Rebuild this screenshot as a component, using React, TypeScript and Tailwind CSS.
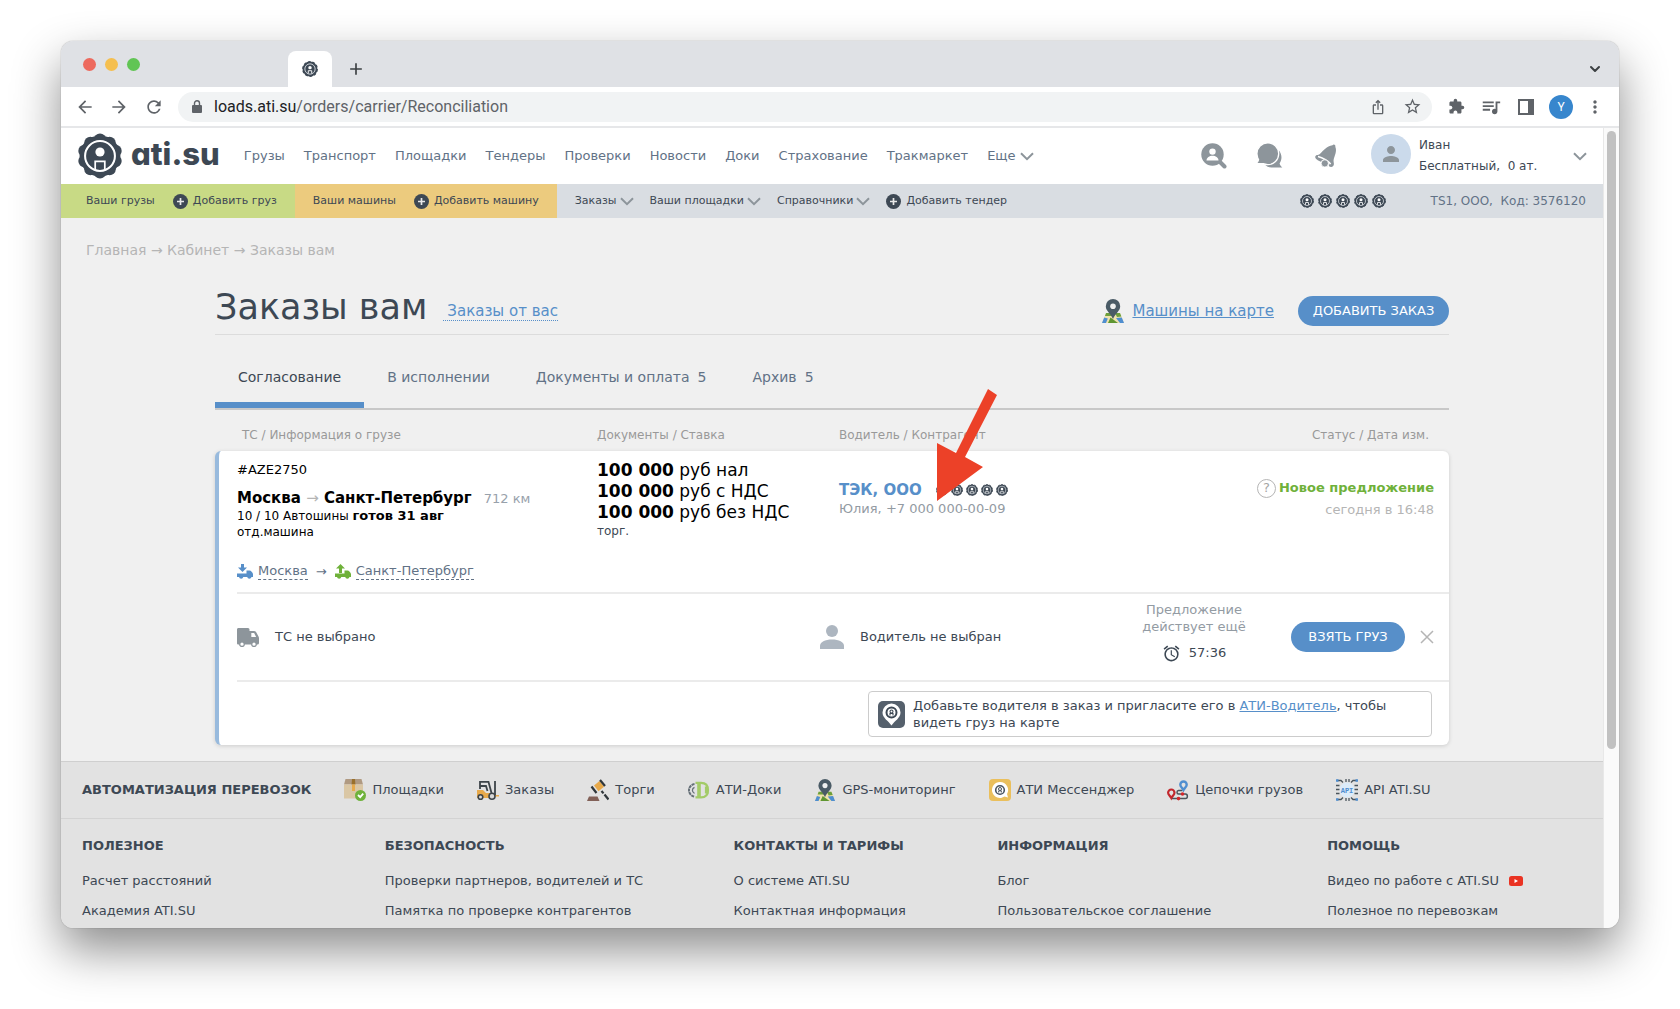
import React from "react";
import {
  MdAdd,
  MdAlarm,
  MdArrowBack,
  MdArrowForward,
  MdExtension,
  MdIosShare,
  MdMoreVert,
  MdPerson,
  MdQueueMusic,
  MdRefresh,
  MdStarBorder,
} from "react-icons/md";
import { LuChevronDown } from "react-icons/lu";

interface IconProps {
  className?: string;
}

const NAV_ITEMS = [
  "Грузы",
  "Транспорт",
  "Площадки",
  "Тендеры",
  "Проверки",
  "Новости",
  "Доки",
  "Страхование",
  "Тракмаркет",
];

const TABS = [
  { name: "Согласование", active: true },
  { name: "В исполнении" },
  { name: "Документы и оплата", count: 5 },
  { name: "Архив", count: 5 },
];

const RATES = ["руб нал", "руб с НДС", "руб без НДС"];

const FOOTER_COLUMNS = [
  { title: "Полезное", links: ["Расчет расстояний", "Академия ATI.SU"] },
  {
    title: "Безопасность",
    links: ["Проверки партнеров, водителей и ТС", "Памятка по проверке контрагентов"],
  },
  { title: "Контакты и тарифы", links: ["О системе ATI.SU", "Контактная информация"] },
  { title: "Информация", links: ["Блог", "Пользовательское соглашение"] },
  { title: "Помощь", links: ["Видео по работе с ATI.SU", "Полезное по перевозкам"], video: true },
];

const GEAR_TEETH = Array.from({ length: 10 }, (_, i) => {
  const angle = (i * Math.PI) / 5;
  return { cx: 22.5 + 16 * Math.sin(angle), cy: 22.5 - 16 * Math.cos(angle) };
});

function Gear({ className }: IconProps) {
  return (
    <svg viewBox="0 0 45 45" className={className} aria-hidden="true">
      <circle cx="22.5" cy="22.5" r="20" fill="#3d4854" />
      {GEAR_TEETH.map(({ cx, cy }, i) => (
        <circle key={i} cx={cx} cy={cy} r="6" fill="#3d4854" />
      ))}
      <circle cx="22.5" cy="22.5" r="14.6" fill="none" stroke="#fff" strokeWidth="2" />
      <circle cx="22.5" cy="18.6" r="4.5" fill="#fff" />
      <path d="M17.8 36.5v-8.8h9.4v8.800" fill="none" stroke="#fff" strokeWidth="1.7" />
    </svg>
  );
}

// Compact variant of the gear, readable at 12-14px
function Badge({ className }: IconProps) {
  return (
    <svg viewBox="0 0 14 14" className={className} aria-hidden="true">
      <circle cx="7" cy="7" r="6.5" fill="#3d4854" />
      <circle
        cx="7"
        cy="7"
        r="6.4"
        fill="none"
        stroke="#3d4854"
        strokeWidth="1"
        strokeDasharray="2.4 1.62"
      />
      <circle cx="7" cy="7" r="4.5" fill="none" stroke="#d9dde2" strokeWidth="0.8" />
      <circle cx="7" cy="5.8" r="1.5" fill="#fff" />
      <path d="M5.5 10.900V8.500h3v2.400" fill="none" stroke="#fff" strokeWidth="0.8" />
    </svg>
  );
}

function Rating({ className, size }: IconProps & { size: string }) {
  return (
    <span className={`inline-flex items-center ${className}`}>
      {[0, 1, 2, 3, 4].map((i) => (
        <Badge key={i} className={size} />
      ))}
    </span>
  );
}

function PlusCircle() {
  return (
    <svg viewBox="0 0 15 15" className="size-[15px]" aria-hidden="true">
      <circle cx="7.5" cy="7.5" r="7.5" fill="#3d4854" />
      <path d="M7.5 4v7M4 7.5h7" stroke="#e8e8e8" strokeWidth="1.7" />
    </svg>
  );
}

function Chevron({ className }: IconProps) {
  return (
    <svg viewBox="0 0 14 9" className={className} fill="none" aria-hidden="true">
      <path d="M1 1.2l6 6 6-6" stroke="currentColor" strokeWidth="2" />
    </svg>
  );
}

function LockIcon({ className }: IconProps) {
  return (
    <svg viewBox="0 0 10 13" className={className} aria-hidden="true">
      <path d="M2.500 6V3.300a2.500 2.500 0 0 1 5 0V6" fill="none" stroke="currentColor" strokeWidth="1.400" />
      <rect y="5" width="10" height="8" rx="1" fill="currentColor" />
    </svg>
  );
}

function MapPin({ className }: IconProps) {
  return (
    <svg viewBox="0 0 22 24" className={className} aria-hidden="true">
      <path d="M4 14h14l4 10H0z" fill="#efe3ae" />
      <path d="M4 14h4l2 3-7 0z" fill="#6d9f3c" />
      <path d="M13 14h5l1.4 3.4-4.4.6z" fill="#6d9f3c" />
      <path d="M8.500 18.500L16 24H6z" fill="#5f9632" />
      <path d="M2.200 18.500l3.600 1L4 24H0z" fill="#4f8ed0" />
      <path d="M14 19l5.800-.5L22 24h-4z" fill="#4f8ed0" />
      <path
        d="M11 0a7.200 7.200 0 0 0-7.200 7.200C3.800 12 8.600 14 11 20c2.400-6 7.200-8 7.200-12.800A7.200 7.200 0 0 0 11 0z"
        fill="#4a5b66"
      />
      <circle cx="11" cy="7.200" r="2.800" fill="#eef0f0" />
    </svg>
  );
}

function SearchUserIcon() {
  return (
    <svg viewBox="0 0 26 26" className="size-[26px]" aria-hidden="true">
      <path d="M19.500 19.500l4 4" stroke="#8d959b" strokeWidth="4" strokeLinecap="round" />
      <circle cx="11.500" cy="11.500" r="11.200" fill="#8d959b" />
      <circle cx="11.500" cy="8.600" r="3.200" fill="#fff" />
      <path d="M5.500 17.500c0-3 3-4.700 6-4.700s6 1.700 6 4.700z" fill="#fff" />
    </svg>
  );
}

function ChatIcon() {
  return (
    <svg viewBox="0 0 26 26" className="size-[26px]" aria-hidden="true">
      <path
        d="M22 7.500c3.400 4.600 3 9.500.6 12.700.3 1.700 1.200 3 2.700 4.300H14.500c-3 0-5-1.200-6.500-2.800 8 .6 14-5.500 14-14.200z"
        fill="#8d959b"
      />
      <circle cx="10.800" cy="10.800" r="10.900" fill="#8d959b" stroke="#fff" strokeWidth="1.300" />
      <path d="M2.500 14c.2 2.400-.6 4.200-2 6h10z" fill="#8d959b" />
    </svg>
  );
}

function BellIcon() {
  return (
    <svg viewBox="0 0 24 26" className="h-[26px] w-6" aria-hidden="true">
      <path
        d="M18.500 2.300c1-1.800 3.600-.4 2.800 1.500 2 4.500-.8 9-1.700 13.200-.4 2.200 1.300 4.200-.6 6.300-1.300 1.300-3 .7-4.300-.2a4.300 4.300 0 0 0-7.800-4.400C4 17.400 1 16.200 1.200 13.800c.3-2.300 2.800-1.600 4.600-2.900C9.500 8 12.500 2.800 18.500 2.300z"
        fill="#8d959b"
      />
      <path d="M4 13.500c4 1 9.500 4 12.700 7.500" fill="none" stroke="#fff" strokeWidth="1.500" />
      <circle cx="10.800" cy="20.400" r="3.600" fill="#8d959b" stroke="#fff" strokeWidth="0.800" />
    </svg>
  );
}

function TruckIcon({ className }: IconProps) {
  return (
    <svg viewBox="0 0 22 19" className={className} aria-hidden="true">
      <path
        d="M1.500 0H11a1.500 1.500 0 0 1 1.500 1.500V3H17c1 0 1.600.4 2.200 1.200l2.200 4.100c.4.700.6 1.300.6 2V15c0 .9-.5 1.500-1.500 1.500H1.500C.6 16.500 0 16 0 15V1.500C0 .6.600 0 1.500 0z"
        fill="#8d959b"
      />
      <path d="M14.300 5h2.800l2 4h-4.800z" fill="#fff" />
      <circle cx="5" cy="16.200" r="2.300" fill="#fff" stroke="#8d959b" strokeWidth="1.300" />
      <circle cx="17" cy="16.200" r="2.300" fill="#fff" stroke="#8d959b" strokeWidth="1.300" />
    </svg>
  );
}

function StopIcon({ up, className }: IconProps & { up?: boolean }) {
  return (
    <svg viewBox="0 0 16 16" className={className} fill="currentColor" aria-hidden="true">
      <path d={up ? "M5.500 0L10 4.500H7V9H4V4.500H1z" : "M4 0h3v3.500h3L5.500 8 1 3.500h3z"} />
      <path d="M0 9.500h9.500V6.500h3c1.500 0 3 2 3.500 3.500V13h-1.500a2.200 2.200 0 0 1-4.300 0H6.300A2.200 2.200 0 0 1 2 13H0z" />
    </svg>
  );
}

function BoxIcon() {
  return (
    <svg viewBox="0 0 22 22" className="size-[22px]" aria-hidden="true">
      <path d="M1.500 0h16L19 5.500H0z" fill="#b09a82" />
      <path d="M0 5.500h19V19.500H0z" fill="#dac7a5" />
      <path d="M8 0h3l.4 5.500H7.600z" fill="#99702c" />
      <path d="M8 5.500h3V12H8z" fill="#e7aa4c" />
      <circle cx="16.500" cy="16.500" r="5.500" fill="#6fb23c" />
      <path d="M14 16l2.200 2.200 3-3.600" fill="none" stroke="#fff" strokeWidth="1.800" />
    </svg>
  );
}

function ForkliftIcon() {
  return (
    <svg viewBox="0 0 22 22" className="size-[22px]" fill="none" aria-hidden="true">
      <path d="M0 11h6l3 3h6v5H0zM17 16h5v1.500h-5z" fill="#e7a94b" />
      <path d="M3 10V2.800h8.500l3 11.200M3 7h6l1.500 5M18 2v14" stroke="#3d4449" strokeWidth="1.800" />
      <circle cx="3.500" cy="18" r="2.300" fill="#d9d9d9" stroke="#3d4449" strokeWidth="1.600" />
      <circle cx="15" cy="17.200" r="3" fill="#d9d9d9" stroke="#3d4449" strokeWidth="1.600" />
    </svg>
  );
}

function GavelIcon() {
  return (
    <svg viewBox="0 0 22 22" className="size-[22px]" fill="none" aria-hidden="true">
      <path d="M2 17.500h8.500l2 4.500H0z" fill="#826158" />
      <path d="M7 6.500l5.500-4.500 4.500 5.800-5.500 4.500z" fill="#e7a94b" />
      <path d="M4.500 7.500l5 6.500M13 1l5 6M14.500 12l2 2.400M17.500 15.500l4 5" stroke="#30373b" strokeWidth="2.200" />
    </svg>
  );
}

function DocsIcon() {
  return (
    <svg viewBox="0 0 22 22" className="size-[22px]" fill="none" aria-hidden="true">
      <path d="M6.500 5a6.300 6.300 0 0 0 0 12.500" stroke="#667078" strokeWidth="2" strokeDasharray="3 0.600" />
      <path d="M6.500 8.300a3.200 3.200 0 0 0 0 6" stroke="#667078" strokeWidth="1.300" />
      <path d="M7.500 3.800h5.500c5 0 7 3 7 7.200s-2 7.400-7 7.400H7.500" stroke="#a3cb68" strokeWidth="2.200" />
      <path d="M11 4v14M18.700 7.500v7" stroke="#a3cb68" strokeWidth="3.600" />
    </svg>
  );
}

function MessengerIcon() {
  return (
    <svg viewBox="0 0 22 22" className="size-[22px]" aria-hidden="true">
      <rect width="22" height="22" rx="4" fill="#eabf5c" />
      <path d="M11 3a8 8 0 1 0 4.500 14.600l3.500.9-1-3.500A8 8 0 0 0 11 3z" fill="#fff" />
      <circle cx="11" cy="11" r="4.300" fill="none" stroke="#4a5560" strokeWidth="1.600" />
      <circle cx="11" cy="10" r="1.500" fill="none" stroke="#4a5560" strokeWidth="1" />
      <path d="M9.700 13.500v-1.700h2.600v1.700" fill="none" stroke="#4a5560" strokeWidth="1" />
    </svg>
  );
}

function ChainIcon() {
  return (
    <svg viewBox="0 0 22 22" className="size-[22px]" fill="none" aria-hidden="true">
      <path
        d="M15.500 11.500h-4c-2 0-2 3.500 0 3.500h7c2.500 0 2.500 4.500 0 4.500H5"
        stroke="#4a545b"
        strokeWidth="1.500"
      />
      <path d="M16.500 2.500a3.200 3.200 0 0 1 3.200 3.200c0 2-2 3-3.200 5.300-1.200-2.300-3.200-3.300-3.200-5.300a3.200 3.200 0 0 1 3.200-3.200z" stroke="#4f8ed0" strokeWidth="2.400" />
      <path d="M4.300 10.500a3.200 3.200 0 0 1 3.200 3.200c0 2-2 3-3.200 5.300-1.200-2.300-3.200-3.300-3.200-5.300a3.200 3.200 0 0 1 3.200-3.200z" stroke="#c2282d" strokeWidth="2.200" />
      <circle cx="15.500" cy="15" r="1.800" fill="#d2262b" />
      <circle cx="11.500" cy="19.600" r="1.800" fill="#d2262b" />
    </svg>
  );
}

function ApiIcon() {
  return (
    <svg viewBox="0 0 22 22" className="size-[22px]" fill="none" aria-hidden="true">
      <circle cx="11" cy="11" r="7.500" fill="#dcecfa" />
      <path
        d="M1 1.500h4l2 2M21 1.500h-4l-2 2M1 20.500h4l2-2M21 20.500h-4l-2-2M10 0v3M13 0v3M10 19v3M13 19v3M0 6.500h3.500M0 10.500h3.500M0 14.500h3.500M18.500 6.500H22M18.500 10.500H22M18.500 14.500H22"
        stroke="#4a545b"
        strokeWidth="1.300"
      />
      <path d="M0 1.500h2.500M19.500 1.500H22M0 20.500h2.500M19.500 20.500H22" stroke="#4f8ed0" strokeWidth="2.400" />
      <text
        x="11"
        y="13.500"
        textAnchor="middle"
        fontSize="7"
        fontWeight="700"
        fontFamily="Liberation Mono, monospace"
        fill="#4f8ed0"
      >
        API
      </text>
    </svg>
  );
}

const SERVICES = [
  { name: "Площадки", icon: <BoxIcon /> },
  { name: "Заказы", icon: <ForkliftIcon /> },
  { name: "Торги", icon: <GavelIcon /> },
  { name: "АТИ-Доки", icon: <DocsIcon /> },
  { name: "GPS-мониторинг", icon: <MapPin className="h-[22px] w-[22px]" /> },
  { name: "АТИ Мессенджер", icon: <MessengerIcon /> },
  { name: "Цепочки грузов", icon: <ChainIcon /> },
  { name: "API ATI.SU", icon: <ApiIcon /> },
];

function BrowserBar() {
  return (
    <div className="font-[Roboto,sans-serif]">
      <div className="flex h-[46px] items-end bg-[#dfe1e5]">
        <div className="flex gap-[9px] self-center pl-[22px]">
          <span className="size-[13px] rounded-full bg-[#ed6a5e]" />
          <span className="size-[13px] rounded-full bg-[#f5bf4f]" />
          <span className="size-[13px] rounded-full bg-[#61c554]" />
        </div>
        <div className="ml-[148px] flex h-9 w-11 items-center justify-center rounded-t-lg bg-white">
          <Badge className="size-4" />
        </div>
        <button aria-label="Новая вкладка" className="mb-2 ml-3.5 text-[#3c4043]">
          <MdAdd className="size-5" />
        </button>
        <button aria-label="Список вкладок" className="mr-4 mb-2.5 ml-auto text-[#3c4043]">
          <LuChevronDown className="size-4" strokeWidth={3} />
        </button>
      </div>
      <div className="flex h-[41px] items-center border-b-2 border-[#e6e7e9] bg-white pr-3.5 pl-3.5 text-[#5f6368]">
        <button aria-label="Назад">
          <MdArrowBack className="size-5" />
        </button>
        <button aria-label="Вперёд" className="ml-3.5">
          <MdArrowForward className="size-5" />
        </button>
        <button aria-label="Обновить" className="ml-[15px]">
          <MdRefresh className="size-5" />
        </button>
        <div className="ml-3.5 flex h-[30px] flex-1 items-center rounded-full bg-[#f1f3f4] pr-2.5 pl-3.5">
          <LockIcon className="h-[13px] w-2.5" />
          <a href="#" className="ml-3 flex-1 text-base">
            <span className="text-[#202124]">loads.ati.su</span>/orders/carrier/Reconciliation
          </a>
          <MdIosShare className="size-4" />
          <MdStarBorder className="ml-[17px] size-[19px]" />
        </div>
        <MdExtension className="ml-4 size-[17px]" />
        <MdQueueMusic className="ml-[15px] size-[22px]" />
        <svg viewBox="0 0 16 16" className="ml-4 size-4" aria-hidden="true">
          <path d="M1 1h14v14H1z" fill="none" stroke="currentColor" strokeWidth="2" />
          <path d="M10 0h6v16h-6z" fill="currentColor" />
        </svg>
        <span className="ml-[15px] flex size-6 items-center justify-center rounded-full bg-[#3786cd] text-xs text-white">
          Y
        </span>
        <button aria-label="Меню" className="ml-3">
          <MdMoreVert className="size-5" />
        </button>
      </div>
    </div>
  );
}

function Header() {
  return (
    <header>
      <div className="flex h-14 items-center bg-white pr-4 pl-4">
        <a href="#" className="flex items-center text-[#3d4854]">
          <Gear className="size-[46px]" />
          <span className="mb-1 ml-2 font-[Inter,sans-serif] text-[31px] leading-[40px] font-extrabold [font-feature-settings:'cv11']">
            ati.su
          </span>
        </a>
        <nav className="ml-6 flex items-center gap-[19px] text-[13px] text-[#627286]">
          {NAV_ITEMS.map((name) => (
            <a key={name} href="#">
              {name}
            </a>
          ))}
          <button className="flex items-center gap-1">
            Еще
            <Chevron className="w-3.5 text-[#8d959b]" />
          </button>
        </nav>
        <div className="ml-auto flex items-center">
          <button aria-label="Поиск участников">
            <SearchUserIcon />
          </button>
          <button aria-label="Сообщения" className="ml-[30px]">
            <ChatIcon />
          </button>
          <button aria-label="Уведомления" className="ml-[31px]">
            <BellIcon />
          </button>
          <span className="mb-1 ml-[33px] flex size-10 items-center justify-center rounded-full bg-[#cbdaeb]">
            <MdPerson className="size-6 text-[#8d959b]" />
          </span>
          <button className="ml-2 flex w-[168px] items-center justify-between text-left text-xs leading-[21px] text-[#3d4854]">
            <span>
              Иван
              <br />
              <span className="whitespace-pre">Бесплатный,  0 ат.</span>
            </span>
            <Chevron className="w-3.5 text-[#8d959b]" />
          </button>
        </div>
      </div>
      <div className="flex h-[34px] items-stretch bg-[#d9dde2] text-[11px] text-[#3d4854]">
        <div className="flex items-center bg-[#c8da85] pr-[18px] pl-[25px]">
          <a href="#">Ваши грузы</a>
          <a href="#" className="ml-[18px] flex items-center gap-[5px]">
            <PlusCircle />
            Добавить груз
          </a>
        </div>
        <div className="flex items-center bg-[#eccb7e] px-[18px]">
          <a href="#">Ваши машины</a>
          <a href="#" className="ml-[18px] flex items-center gap-[5px]">
            <PlusCircle />
            Добавить машину
          </a>
        </div>
        <div className="flex items-center gap-4 pl-[18px]">
          {["Заказы", "Ваши площадки", "Справочники"].map((name) => (
            <button key={name} className="flex items-center gap-[3px]">
              {name}
              <Chevron className="w-3.5 text-[#8d959b]" />
            </button>
          ))}
          <a href="#" className="flex items-center gap-[5px]">
            <PlusCircle />
            Добавить тендер
          </a>
        </div>
        <Rating className="ml-auto gap-1" size="size-3.5" />
        <p className="ml-[45px] self-center pr-[17px] text-xs whitespace-pre text-[#627286]">
          TS1, ООО,  Код: 3576120
        </p>
      </div>
    </header>
  );
}

function OrdersTable() {
  return (
    <table className="block text-left text-[13px]">
      <thead className="block pt-[17px] pb-2 text-xs leading-4 text-[#999]">
        <tr className="mr-[15px] ml-[22px] grid grid-cols-[360fr_242fr_395fr_200fr] *:font-normal">
          <th className="pl-[5px]">ТС / Информация о грузе</th>
          <th>Документы / Ставка</th>
          <th>Водитель / Контрагент</th>
          <th className="pr-[5px] text-right">Статус / Дата изм.</th>
        </tr>
      </thead>
      <tbody className="block rounded-md border-l-4 border-[#98badd] bg-white shadow-[0_1px_4px_rgba(0,0,0,0.15)]">
        <tr className="mr-[15px] ml-[18px] grid grid-cols-[360fr_242fr_395fr_200fr] pt-[9px] pb-3">
          <td className="text-black">
            <p className="leading-5">#AZE2750</p>
            <p className="mt-[9px] text-[15px] leading-[18px] font-bold">
              Москва <span className="font-normal text-[#b5b5b5]">→</span> Санкт-Петербург
              <span className="ml-3 text-[13px] font-normal text-[#98a1ab]">712 км</span>
            </p>
            <p className="text-xs leading-4">
              10 / 10 Автошины <b className="text-[13px] leading-4">готов 31 авг</b>
              <br />
              отд.машина
            </p>
            <p className="mt-[23px] flex items-center leading-4 text-[#627286]">
              <StopIcon className="size-4 text-[#578fc9]" />
              <a href="#" className="ml-[5px] border-b border-dashed border-[#627286]">
                Москва
              </a>
              <span className="mx-2">→</span>
              <StopIcon up className="size-4 text-[#6fb13a]" />
              <a href="#" className="ml-[5px] border-b border-dashed border-[#627286]">
                Санкт-Петербург
              </a>
            </p>
          </td>
          <td className="text-[17px] leading-[21px] text-black">
            {RATES.map((rate) => (
              <p key={rate}>
                <b>100 000</b> {rate}
              </p>
            ))}
            <p className="text-xs leading-4 text-[#3d4854]">торг.</p>
          </td>
          <td className="relative pt-5">
            <p className="flex items-center leading-5">
              <a href="#" className="text-[15px] font-bold text-[#578fc9]">
                ТЭК, ООО
              </a>
              <Rating className="ml-3.5 gap-[3px]" size="size-3" />
            </p>
            <p className="leading-[18px] text-[#939ba3]">Юлия, +7 000 000-00-09</p>
            <svg
              viewBox="0 0 60 112"
              className="absolute -top-[71px] left-[98px] h-28 w-[60px]"
              aria-hidden="true"
            >
              <path d="M51 0l9 6-32 62 18 10L0 112V54l19 10z" fill="#ec4128" />
            </svg>
          </td>
          <td className="pt-[18px] text-right">
            <p className="flex items-center justify-end gap-[3px] leading-5 font-bold whitespace-nowrap text-[#6fb13a]">
              <span className="flex size-[19px] items-center justify-center rounded-full border border-[#b5b5b5] font-normal text-[#a5a5a5]">
                ?
              </span>
              Новое предложение
            </p>
            <p className="mt-[3px] leading-[18px] text-[#b5b5b5]">сегодня в 16:48</p>
          </td>
        </tr>
        <tr className="ml-[18px] grid h-22 grid-cols-[583fr_291fr_166fr_157fr] items-center border-t-2 border-[#ebebeb] pr-[15px] text-[#3d4854]">
          <td className="flex items-center">
            <TruckIcon className="h-[19px] w-[22px]" />
            <span className="ml-4">ТС не выбрано</span>
          </td>
          <td className="flex items-center">
            <svg viewBox="0 0 24 24" className="size-6" fill="#adb6c0" aria-hidden="true">
              <circle cx="12" cy="6" r="6" />
              <path d="M0 24v-3c0-4 5-6.500 12-6.500S24 17 24 21v3z" />
            </svg>
            <span className="ml-4">Водитель не выбран</span>
          </td>
          <td className="self-start pt-[7px] text-center leading-[17px] text-[#939ba3]">
            Предложение
            <br />
            действует ещё
            <span className="mt-2 flex items-center justify-center gap-2 leading-5 text-[#3d4854]">
              <MdAlarm className="size-[19px]" />
              57:36
            </span>
          </td>
          <td className="flex items-center justify-end gap-[15px]">
            <button className="h-[30px] w-[114px] rounded-full bg-[#578fc9] text-white uppercase">
              Взять груз
            </button>
            <button aria-label="Отклонить" className="text-[#b5b5b5]">
              <svg viewBox="0 0 14 14" className="size-3.5" aria-hidden="true">
                <path d="M1 1l12 12M13 1L1 13" stroke="currentColor" strokeWidth="1.5" />
              </svg>
            </button>
          </td>
        </tr>
        <tr className="ml-[18px] block border-t-2 border-[#ebebeb] pt-[9px] pr-[17px] pb-2">
          <td className="ml-auto flex w-full max-w-[564px] items-center rounded border border-[#ccc] px-[9px] py-[5px] leading-[17px] text-[#3d4854]">
            <svg viewBox="0 0 27 27" className="size-[27px] shrink-0" aria-hidden="true">
              <rect width="27" height="27" rx="5" fill="#55606c" />
              <path
                d="M13.500 2.500a9 9 0 0 0-9 9c0 5.500 6 8.500 9 13 3-4.500 9-7.500 9-13a9 9 0 0 0-9-9z"
                fill="#fff"
              />
              <circle cx="13.500" cy="11.500" r="5" fill="none" stroke="#3d4854" strokeWidth="2" />
              <circle cx="13.500" cy="10.500" r="1.500" fill="none" stroke="#3d4854" strokeWidth="1.100" />
              <path d="M12 14.500v-2h3v2" fill="none" stroke="#3d4854" strokeWidth="1.100" />
            </svg>
            <span className="ml-2">
              Добавьте водителя в заказ и пригласите его в{" "}
              <a href="#" className="text-[#578fc9] underline">
                АТИ-Водитель
              </a>
              , чтобы
              <br />
              видеть груз на карте
            </span>
          </td>
        </tr>
      </tbody>
    </table>
  );
}

function Orders() {
  return (
    <main className="bg-[#f0f0f0] pt-[22px] pb-4">
      <p className="pl-[25px] text-sm leading-5 text-[#b5b5b5]">Главная → Кабинет → Заказы вам</p>
      <div className="mx-auto max-w-[1234px]">
        <div className="mt-[25px] flex items-end border-b border-[#dcdcdc] pb-[5px]">
          <h1 className="text-[35px] leading-[44px] text-[#3d4854]">Заказы вам</h1>
          <a
            href="#"
            className="mb-2 ml-4 border-b border-dotted border-[#578fc9] pl-1 text-[15px] leading-[17px] text-[#578fc9]"
          >
            Заказы от вас
          </a>
          <div className="mb-[3px] ml-auto flex items-center">
            <MapPin className="h-6 w-[22px]" />
            <a href="#" className="ml-2 text-[15px] text-[#578fc9] underline">
              Машины на карте
            </a>
            <button className="ml-6 h-[30px] w-[151px] rounded-full bg-[#578fc9] text-[13px] text-white uppercase">
              Добавить заказ
            </button>
          </div>
        </div>
        <nav className="flex border-b-2 border-[#c8c8c8] text-sm leading-5">
          {TABS.map(({ name, count, active }) => (
            <a
              key={name}
              href="#"
              className={`border-b-[6px] px-[23px] pt-8 pb-[15px] ${
                active ? "border-[#578fc9] text-[#3d4854]" : "border-transparent text-[#627286]"
              }`}
            >
              {name}
              {count && <span className="ml-2">{count}</span>}
            </a>
          ))}
        </nav>
        <OrdersTable />
      </div>
    </main>
  );
}

function Footer() {
  return (
    <footer className="border-t border-[#cfcfcf] bg-[#e2e2e2] pb-[7px] text-[13px] text-[#3d4854]">
      <div className="flex items-center gap-[33px] border-b border-[#d3d3d3] px-[21px] py-[17px]">
        <h2 className="font-bold uppercase">Автоматизация перевозок</h2>
        {SERVICES.map(({ name, icon }) => (
          <a key={name} href="#" className="flex items-center gap-1.5">
            {icon}
            {name}
          </a>
        ))}
      </div>
      <div className="grid grid-cols-[303fr_349fr_264fr_330fr_255fr] px-[21px] pt-[17px] leading-5">
        {FOOTER_COLUMNS.map(({ title, links, video }) => (
          <div key={title}>
            <h3 className="mb-[15px] font-bold uppercase">{title}</h3>
            <ul className="flex flex-col gap-2.5">
              {links.map((link, i) => (
                <li key={link} className="flex items-center">
                  <a href="#">{link}</a>
                  {video && i === 0 && (
                    <svg viewBox="0 0 14 10" className="ml-2.5 w-3.5" aria-hidden="true">
                      <rect width="14" height="10" rx="2.500" fill="#ea3323" />
                      <path d="M5.500 3l3.500 2-3.500 2z" fill="#fff" />
                    </svg>
                  )}
                </li>
              ))}
            </ul>
          </div>
        ))}
      </div>
    </footer>
  );
}

export default function App() {
  return (
    <div className="min-h-screen bg-white px-[61px] pt-[41px] pb-20 font-['DejaVu_Sans',Verdana,sans-serif]">
      <div className="overflow-hidden rounded-xl shadow-[0_0_1px_rgba(0,0,0,0.5),0_22px_48px_rgba(0,0,0,0.45)]">
        <BrowserBar />
        <div className="flex">
          <div className="min-w-0 flex-1">
            <Header />
            <Orders />
            <Footer />
          </div>
          <div className="w-4 border-l border-[#e8e8e8] bg-[#fafafa] pt-[3px] pl-[3px]">
            <div className="h-[618px] w-[9px] rounded-full bg-[#c1c1c1]" />
          </div>
        </div>
      </div>
    </div>
  );
}
